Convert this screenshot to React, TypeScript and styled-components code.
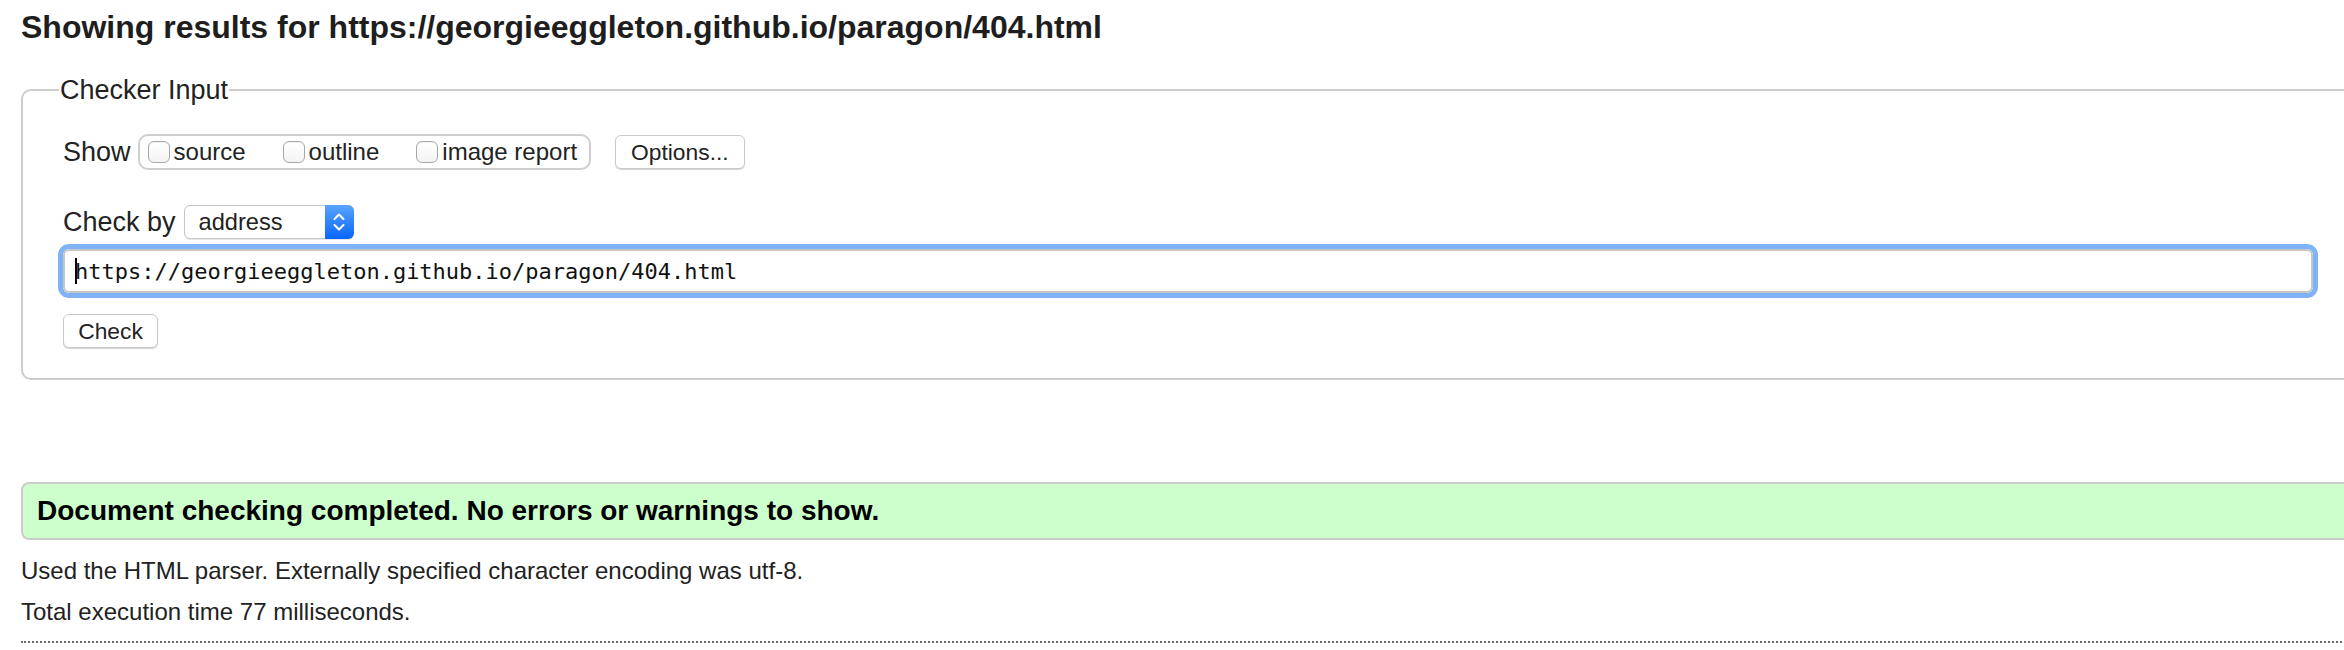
import React from 'react';
import styled, { createGlobalStyle } from 'styled-components';

const Global = createGlobalStyle`
  html, body {
    margin: 0;
    padding: 0;
    background: #ffffff;
    overflow: hidden;
  }
  body {
    font-family: "Liberation Sans", Arial, Helvetica, sans-serif;
    color: #222222;
  }
`;

const Page = styled.div`
  width: 2332px;
  padding: 7px 0 0 21px;
`;

const Title = styled.h2`
  margin: 0;
  font-size: 32px;
  line-height: 40px;
  font-weight: bold;
  color: #1e1e1e;
`;

const Fieldset = styled.fieldset`
  margin: 28px 0 0 0;
  padding: 29px 38px 30px 40px;
  border: 2px solid #cdcdcd;
  border-radius: 10px;
  min-width: 0;
  display: flex;
  flex-direction: column;
  align-items: flex-start;
`;

const Legend = styled.legend`
  font-size: 27px;
  line-height: 30px;
  padding: 0 1px;
  margin-left: -4px;
  color: #222;
`;

const Row = styled.div<{ $top?: number; $gap?: number }>`
  display: flex;
  align-items: center;
  gap: ${(p) => p.$gap ?? 8}px;
  margin-top: ${(p) => p.$top ?? 0}px;
`;

const RowLabel = styled.span`
  font-size: 27px;
  line-height: 30px;
  color: #222;
`;

const OptionGroup = styled.div`
  display: flex;
  align-items: center;
  gap: 37px;
  height: 36px;
  box-sizing: border-box;
  border: 2px solid #cfcfcf;
  border-radius: 10px;
  padding: 0 12px 0 8px;
`;

const OptionLabel = styled.label`
  display: flex;
  align-items: center;
  gap: 4px;
  font-size: 24px;
  line-height: 28px;
  color: #222;
`;

const Checkbox = styled.span`
  display: inline-block;
  width: 22px;
  height: 22px;
  box-sizing: border-box;
  border: 1px solid #a8a8a8;
  border-radius: 6px;
  background: linear-gradient(#ffffff, #f4f4f4);
  box-shadow: inset 0 1px 1px rgba(0, 0, 0, 0.05);
`;

const PushButton = styled.button<{ $width?: number }>`
  height: 34px;
  ${(p) => (p.$width ? `width: ${p.$width}px;` : 'padding: 0 15px;')}
  box-sizing: border-box;
  font-family: "Liberation Sans", Arial, Helvetica, sans-serif;
  font-size: 22.8px;
  color: #222;
  background: #ffffff;
  border: 1px solid #c9c9c9;
  border-radius: 6px;
  box-shadow: 0 1px 1px rgba(0, 0, 0, 0.18);
  margin-left: ${(p) => (p.$width ? 0 : 17)}px;
`;

const Select = styled.div`
  display: flex;
  align-items: stretch;
  width: 170px;
  height: 34px;
  box-sizing: border-box;
  border: 1px solid #c6c6c6;
  border-radius: 6px;
  background: #ffffff;
  box-shadow: 0 1px 1px rgba(0, 0, 0, 0.1);
`;

const SelectText = styled.span`
  flex: 1;
  display: flex;
  align-items: center;
  padding-left: 14px;
  font-size: 23.6px;
  color: #222;
`;

const SelectArrow = styled.span`
  width: 29px;
  margin: -1px -1px -1px 0;
  border-radius: 0 6px 6px 0;
  background: linear-gradient(#5aa4fd, #0866fb);
  display: flex;
  align-items: center;
  justify-content: center;
`;

const UrlField = styled.div`
  display: flex;
  align-items: center;
  align-self: stretch;
  height: 44px;
  margin-top: 10px;
  box-sizing: border-box;
  border: 2px solid #c6c6c6;
  border-radius: 6px;
  box-shadow: 0 0 0 5px #80b3f6;
  padding-left: 10px;
  font-family: "DejaVu Sans Mono", "Liberation Mono", monospace;
  font-size: 22px;
  color: #111;
`;

const Caret = styled.span`
  display: inline-block;
  width: 2px;
  height: 26px;
  background: #000;
  margin-right: -2px;
`;

const Success = styled.div`
  margin-top: 102px;
  height: 58px;
  box-sizing: border-box;
  border: 2px solid #cccccc;
  border-radius: 8px;
  background: #ccffcc;
  padding-left: 14px;
  display: flex;
  align-items: center;
  font-size: 28px;
  font-weight: bold;
  color: #000;
`;

const Info = styled.p<{ $top: number }>`
  margin: ${(p) => p.$top}px 0 0 0;
  font-size: 24px;
  line-height: 30px;
  color: #222;
`;

const Divider = styled.hr`
  margin: 14px 0 0 0;
  border: 0;
  border-top: 2px dotted #6a6a6a;
  height: 0;
`;

const Chevrons = () => (
  <svg width="14" height="22" viewBox="0 0 14 22" fill="none" stroke="#ffffff" strokeWidth="2" strokeLinecap="round" strokeLinejoin="round">
    <path d="M2.5 8 L7 3.5 L11.5 8" />
    <path d="M2.5 14 L7 18.5 L11.5 14" />
  </svg>
);

export default function App() {
  return (
    <>
      <Global />
      <Page>
        <Title>Showing results for https://georgieeggleton.github.io/paragon/404.html</Title>
        <Fieldset>
          <Legend>Checker Input</Legend>
          <Row $gap={7}>
            <RowLabel>Show</RowLabel>
            <OptionGroup>
              <OptionLabel>
                <Checkbox />
                source
              </OptionLabel>
              <OptionLabel>
                <Checkbox />
                outline
              </OptionLabel>
              <OptionLabel>
                <Checkbox />
                image report
              </OptionLabel>
            </OptionGroup>
            <PushButton>Options...</PushButton>
          </Row>
          <Row $top={35} $gap={8}>
            <RowLabel>Check by</RowLabel>
            <Select>
              <SelectText>address</SelectText>
              <SelectArrow>
                <Chevrons />
              </SelectArrow>
            </Select>
          </Row>
          <UrlField>
            <Caret />
            <span>https://georgieeggleton.github.io/paragon/404.html</span>
          </UrlField>
          <Row $top={21}>
            <PushButton $width={95}>Check</PushButton>
          </Row>
        </Fieldset>
        <Success>Document checking completed. No errors or warnings to show.</Success>
        <Info $top={16}>Used the HTML parser. Externally specified character encoding was utf-8.</Info>
        <Info $top={11}>Total execution time 77 milliseconds.</Info>
        <Divider />
      </Page>
    </>
  );
}
